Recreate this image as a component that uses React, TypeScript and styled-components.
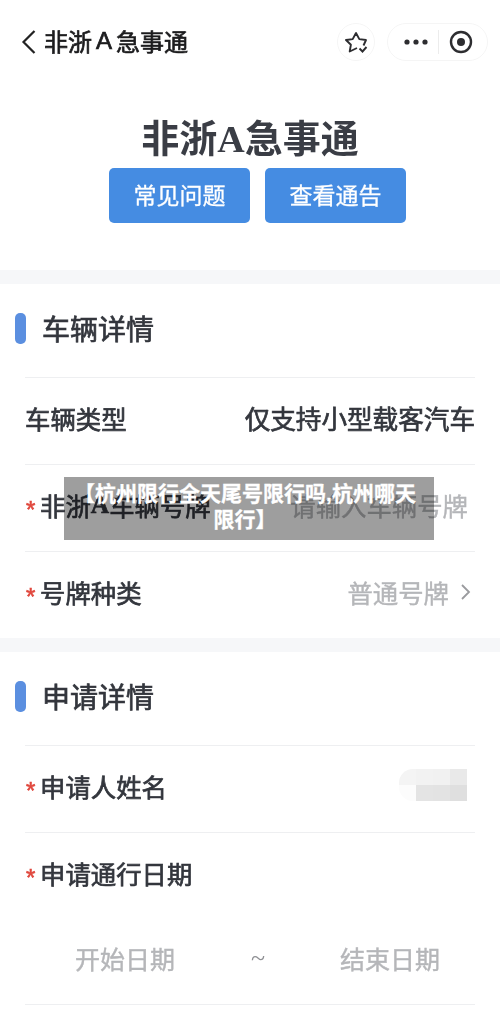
import React from 'react';
import styled, { createGlobalStyle } from 'styled-components';

const GlobalStyle = createGlobalStyle`
  html, body {
    margin: 0;
    padding: 0;
    background: #fff;
  }
  body {
    font-family: "Liberation Sans", "Noto Sans CJK SC", sans-serif;
  }
`;

const Page = styled.div`
  position: relative;
  width: 500px;
  height: 1018px;
  overflow: hidden;
  background: #fff;
`;

const Content = styled.div`
  filter: blur(0.45px);
`;

const NavBar = styled.div`
  display: flex;
  align-items: center;
  height: 38px;
  padding: 23px 12px 0 20px;
`;

const BackIcon = styled.svg`
  width: 18px;
  height: 28px;
  margin-right: 6px;
`;

const NavTitle = styled.div`
  flex: 1;
  display: flex;
  align-items: center;
  padding-bottom: 3px;
  font-size: 24px;
  color: #1c1c1e;
  -webkit-text-stroke: 0.7px #1c1c1e;
`;

const NavLetter = styled.span`
  margin: 0 4px;
`;

const StarButton = styled.div`
  display: flex;
  align-items: center;
  justify-content: center;
  width: 36px;
  height: 36px;
  margin-right: 12px;
  border: 1px solid #f5f5f5;
  border-radius: 50%;
`;

const Capsule = styled.div`
  display: flex;
  align-items: center;
  width: 99px;
  height: 36px;
  border: 1px solid #f5f5f5;
  border-radius: 19px;
`;

const CapsuleLeft = styled.div`
  flex: 1;
  display: flex;
  align-items: center;
  justify-content: center;
  padding-left: 6px;
`;

const CapsuleRight = styled.div`
  flex: 1;
  display: flex;
  align-items: center;
  justify-content: center;
  padding-right: 4px;
`;

const CapsuleDivider = styled.div`
  width: 1px;
  height: 24px;
  background: #ececec;
`;

const Hero = styled.div`
  display: flex;
  flex-direction: column;
  align-items: center;
  height: 157px;
  padding-top: 52px;
`;

const HeroTitle = styled.div`
  height: 55px;
  line-height: 52px;
  font-size: 38px;
  font-weight: 700;
  color: #3a3d45;
`;

const SerifLetter = styled.span`
  font-family: "Liberation Serif", serif;
  font-weight: 700;
`;

const ButtonRow = styled.div`
  display: flex;
  gap: 15px;
  margin-left: 15px;
`;

const HeroButton = styled.div`
  display: flex;
  align-items: center;
  justify-content: center;
  width: 141px;
  height: 52px;
  padding-bottom: 3px;
  border-radius: 5px;
  background: #458ce2;
  color: #fff;
  font-size: 23px;
  -webkit-text-stroke: 0.3px #fff;
`;

const Strip = styled.div`
  height: 14px;
  background: #f6f7f9;
`;

const SectionHead = styled.div`
  display: flex;
  align-items: center;
  gap: 16px;
  height: 89px;
  padding: 0 0 4px 15px;
`;

const SectionBar = styled.div`
  width: 11px;
  height: 31px;
  border-radius: 5px;
  background: #5b8fe0;
`;

const SectionTitle = styled.div`
  margin-top: -2px;
  font-size: 28px;
  color: #33363d;
  -webkit-text-stroke: 0.7px #33363d;
`;

const Row = styled.div`
  display: flex;
  align-items: center;
  justify-content: space-between;
  height: 79px;
  padding-bottom: 7px;
  margin: 0 25px;
  border-top: 1px solid #eeeff1;
  font-size: 25.4px;
`;

const Label = styled.div<{ $required?: boolean }>`
  position: relative;
  display: flex;
  align-items: center;
  padding-left: ${(p) => (p.$required ? '15px' : '0')};
  color: #33363d;
  -webkit-text-stroke: 0.7px #33363d;
`;

const Star = styled.span`
  position: absolute;
  left: 1px;
  top: 9px;
  color: #e0483e;
  font-size: 24px;
  font-family: "Liberation Sans", sans-serif;
  -webkit-text-stroke: 0.6px #e0483e;
`;

const Value = styled.div`
  font-size: 25.6px;
  color: #33363d;
  -webkit-text-stroke: 0.7px #33363d;
`;

const MutedValue = styled.div<{ $inset?: number }>`
  display: flex;
  align-items: center;
  padding-right: ${(p) => p.$inset ?? 0}px;
  color: #b5b6b9;
  -webkit-text-stroke: 0.4px #b5b6b9;
`;

const Chevron = styled.svg`
  width: 12px;
  height: 18px;
  margin-left: 11px;
  margin-right: 3px;
`;

const Mosaic = styled.div`
  display: grid;
  grid-template-columns: repeat(4, 17px);
  grid-template-rows: repeat(2, 16px);
  margin-right: 8px;
  margin-top: -2px;
  overflow: hidden;
  border-radius: 14px 0 0 14px;
`;

const MosaicCell = styled.div<{ $shade: string }>`
  background: ${(p) => p.$shade};
`;

const DateRow = styled.div`
  display: grid;
  grid-template-columns: 225px 1fr 135px;
  align-items: center;
  height: 77px;
  padding-bottom: 8px;
  margin: 0 25px;
  border-bottom: 1px solid #eeeff1;
  font-size: 25px;
  color: #b5b6b9;
  -webkit-text-stroke: 0.4px #b5b6b9;
`;

const DateStart = styled.div`
  padding-left: 50px;
`;

const DateTilde = styled.div`
  padding-left: 1px;
  font-size: 26px;
  color: #8f9094;
  font-family: "Liberation Serif", serif;
  -webkit-text-stroke: 0;
`;

const Toast = styled.div`
  position: absolute;
  left: 64px;
  top: 477px;
  width: 370px;
  height: 63px;
  padding: 4px 16px 0 8px;
  box-sizing: border-box;
  background: rgba(0, 0, 0, 0.38);
  color: #fff;
  font-size: 21px;
  font-weight: 700;
  line-height: 26px;
  text-align: center;
  -webkit-text-stroke: 0.3px #fff;
`;

const mosaicShades = ['#f4f4f4', '#f2f2f2', '#f1f1f1', '#e9e9e9', '#fcfcfc', '#e4e4e4', '#e3e3e3', '#dfdfdf'];

const App = () => {
  return (
    <Page>
      <GlobalStyle />
      <Content>
        <NavBar>
          <BackIcon viewBox="0 0 18 28">
            <path d="M14.5 3 3.5 14l11 11" fill="none" stroke="#222" strokeWidth="2.2" />
          </BackIcon>
          <NavTitle>
            非浙<NavLetter>A</NavLetter>急事通
          </NavTitle>
          <StarButton>
            <svg width="24" height="24" viewBox="0 0 24 24" fill="none" stroke="#2d2d30" strokeWidth="1.9">
              <path d="M19.5 15.5 22 10l-6.700-.9L12 3 8.700 9.100 2 10l4.900 4.700L5.700 21.500l7.300-3.500" strokeLinejoin="round" />
              <path d="m15.500 18.500 3 3 4-4.500" />
            </svg>
          </StarButton>
          <Capsule>
            <CapsuleLeft>
              <svg width="24" height="6" viewBox="0 0 24 6" fill="#2d2d30">
                <circle cx="3" cy="3" r="2.600" />
                <circle cx="12" cy="3" r="2.600" />
                <circle cx="21" cy="3" r="2.600" />
              </svg>
            </CapsuleLeft>
            <CapsuleDivider />
            <CapsuleRight>
              <svg width="24" height="24" viewBox="0 0 24 24">
                <circle cx="12" cy="12" r="10" fill="none" stroke="#2d2d30" strokeWidth="2.400" />
                <circle cx="12" cy="12" r="4" fill="#2d2d30" />
              </svg>
            </CapsuleRight>
          </Capsule>
        </NavBar>

        <Hero>
          <HeroTitle>
            非浙<SerifLetter>A</SerifLetter>急事通
          </HeroTitle>
          <ButtonRow>
            <HeroButton>常见问题</HeroButton>
            <HeroButton>查看通告</HeroButton>
          </ButtonRow>
        </Hero>

        <Strip />
        <SectionHead>
          <SectionBar />
          <SectionTitle>车辆详情</SectionTitle>
        </SectionHead>
        <Row>
          <Label>车辆类型</Label>
          <Value>仅支持小型载客汽车</Value>
        </Row>
        <Row>
          <Label $required>
            <Star>*</Star>
            非浙<SerifLetter>A</SerifLetter>车辆号牌
          </Label>
          <MutedValue $inset={7}>请输入车辆号牌</MutedValue>
        </Row>
        <Row>
          <Label $required>
            <Star>*</Star>
            号牌种类
          </Label>
          <MutedValue>
            普通号牌
            <Chevron viewBox="0 0 12 18">
              <path d="m2 2 7 7-7 7" fill="none" stroke="#9a9b9e" strokeWidth="1.800" />
            </Chevron>
          </MutedValue>
        </Row>

        <Strip />
        <SectionHead>
          <SectionBar />
          <SectionTitle>申请详情</SectionTitle>
        </SectionHead>
        <Row>
          <Label $required>
            <Star>*</Star>
            申请人姓名
          </Label>
          <Mosaic>
            {mosaicShades.map((shade, i) => (
              <MosaicCell key={i} $shade={shade} />
            ))}
          </Mosaic>
        </Row>
        <Row>
          <Label $required>
            <Star>*</Star>
            申请通行日期
          </Label>
        </Row>
        <DateRow>
          <DateStart>开始日期</DateStart>
          <DateTilde>~</DateTilde>
          <div>结束日期</div>
        </DateRow>
      </Content>

      <Toast>【杭州限行全天尾号限行吗,杭州哪天限行】</Toast>
    </Page>
  );
};

export default App;
